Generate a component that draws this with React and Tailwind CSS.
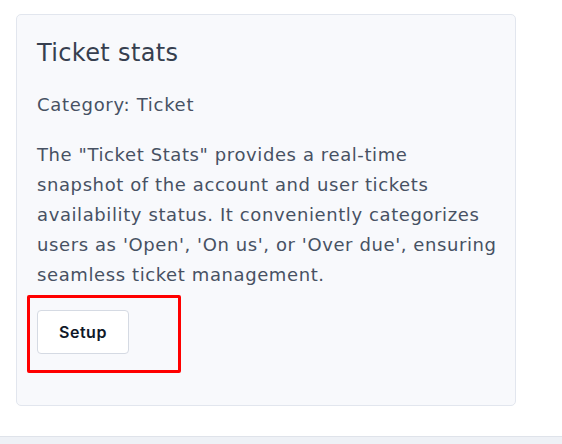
export default function App() {
  return (
    <div className="min-h-[444px] bg-white flex flex-col" style={{ fontFamily: '"DejaVu Sans", sans-serif' }}>
      <div className="flex-1 pt-[14px] pl-4">
        <div className="w-[500px] h-[392px] rounded-[5px] border border-[#e2e6ee] bg-[#f8f9fc] px-5 pt-5">
          <h2 className="text-[24px] leading-[32px] tracking-[0.35px] text-[#363f4f] pt-[2px]">Ticket stats</h2>
          <p className="mt-[23px] text-[18px] leading-[26px] tracking-[0.7px] text-[#475163]">Category: Ticket</p>
          <p className="mt-[22px] whitespace-nowrap text-[18px] leading-[30px] tracking-[0.6px] text-[#475163]">
            The "Ticket Stats" provides a real-time
            <br />
            snapshot of the account and user tickets
            <br />
            availability status. It conveniently categorizes
            <br />
            users as 'Open', 'On us', or 'Over due', ensuring
            <br />
            seamless ticket management.
          </p>
          <div className="relative mt-[20px] w-fit">
            <button
              className="h-[44px] w-[92px] rounded-[4px] border border-[#d5dae3] bg-white text-[16px] font-semibold tracking-[0.5px] text-[#101828]"
              style={{ fontFamily: 'Inter, sans-serif' }}
            >
              Setup
            </button>
            <div className="pointer-events-none absolute -left-[10px] -top-[15px] h-[78px] w-[154px] rounded-[2px] border-[3px] border-[#ff0000]" />
          </div>
        </div>
      </div>
      <div className="h-[8px] border-t border-[#dfe3ea] bg-[#eef1f6]" />
    </div>
  );
}
